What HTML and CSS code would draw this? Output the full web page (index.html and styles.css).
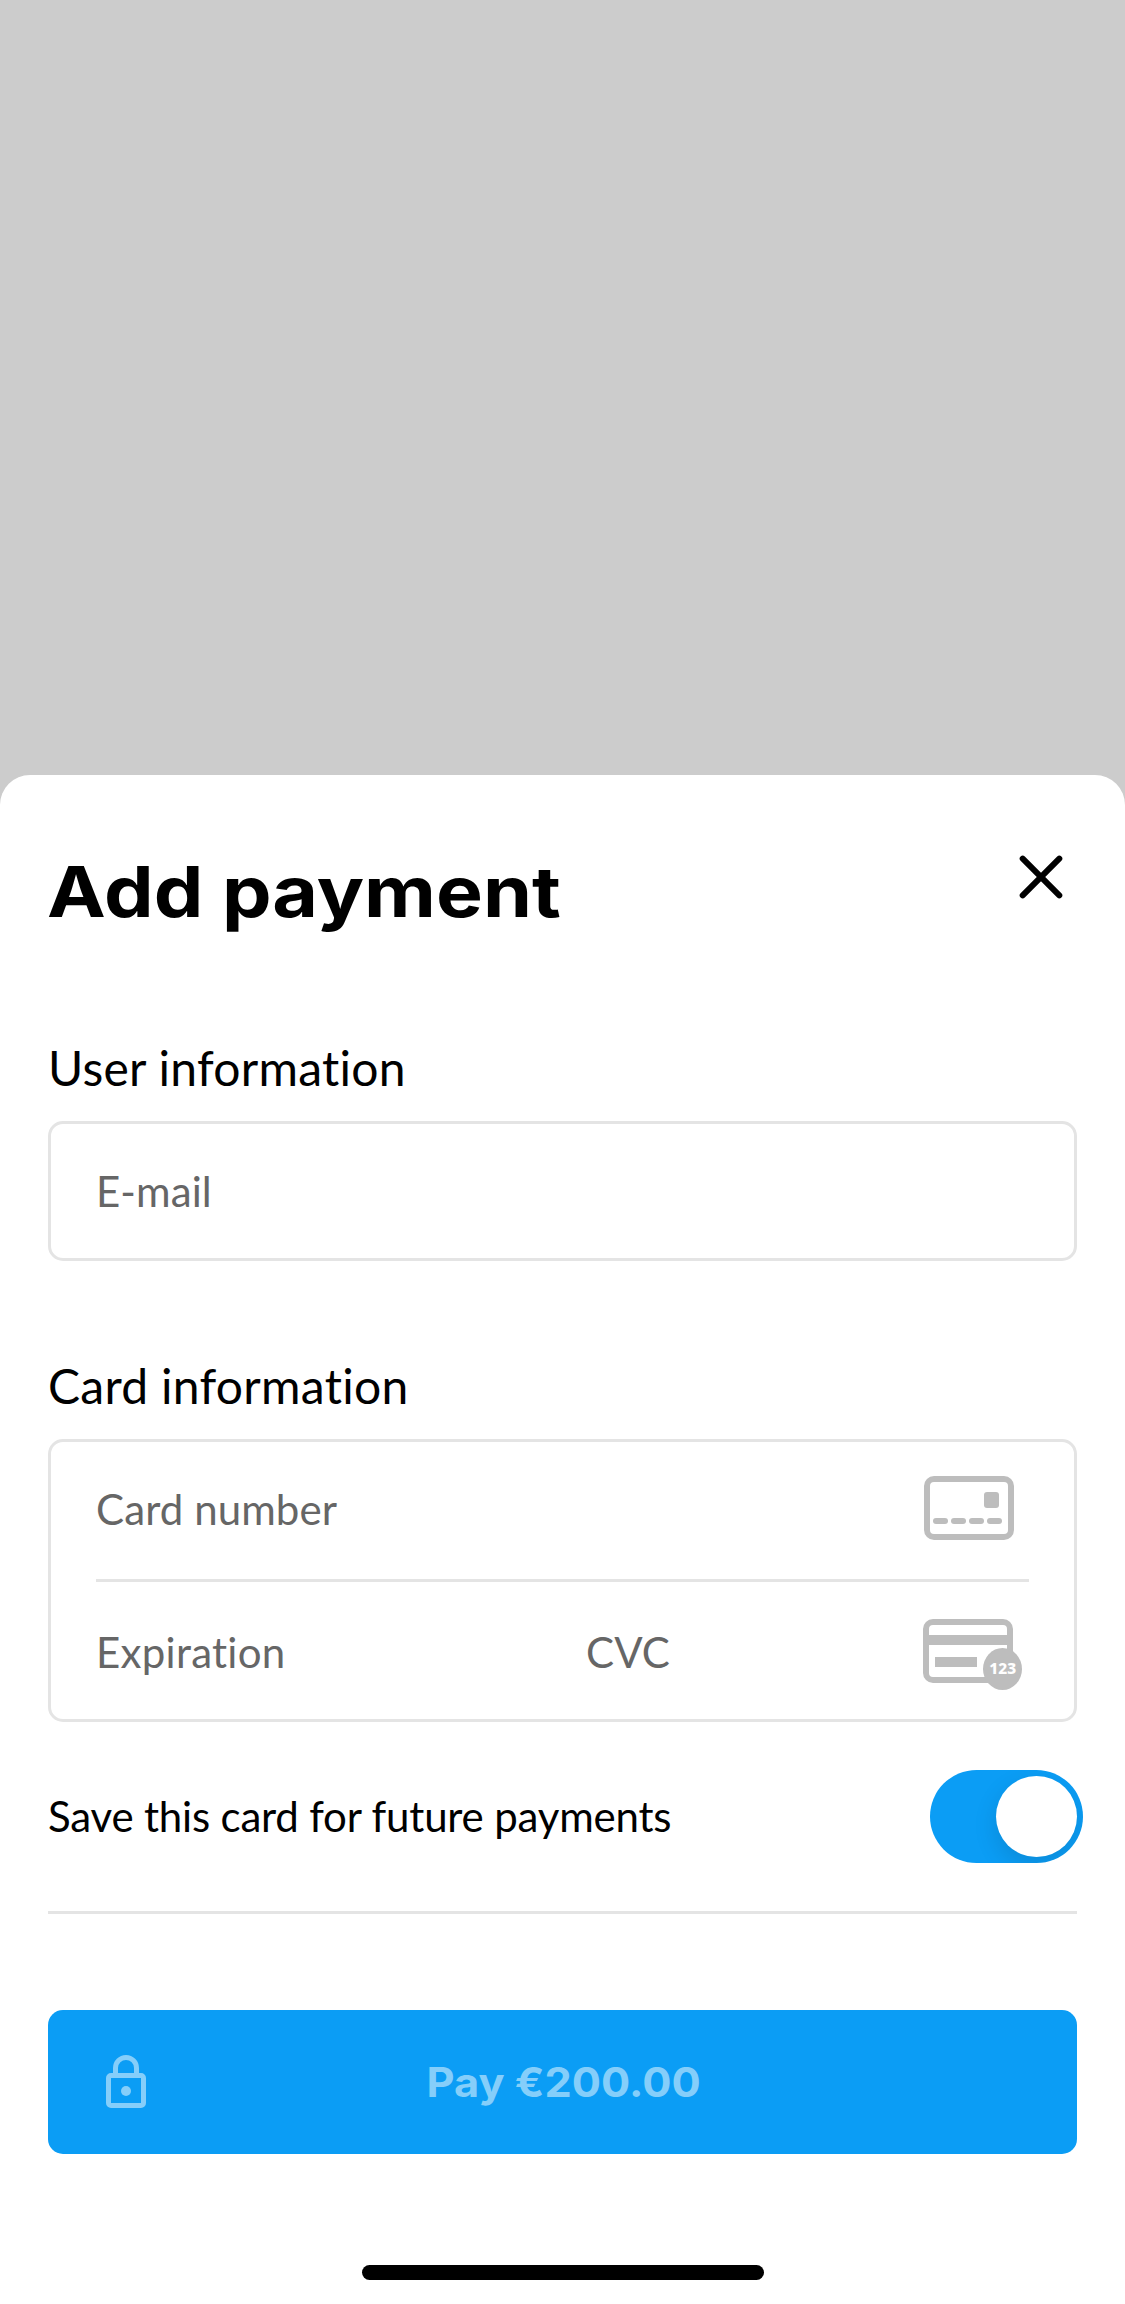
FILE: index.html
```html
<!DOCTYPE html>
<html lang="en">
<head>
<meta charset="utf-8">
<title>Add payment</title>
<link rel="stylesheet" href="styles.css">
</head>
<body>
<main class="sheet">
  <header class="header">
    <h1 class="title">Add payment</h1>
    <svg class="close" width="48" height="48" viewBox="0 0 48 48" role="img" aria-label="Close">
      <path d="M5.7 5.7 42.3 42.3M42.3 5.7 5.7 42.3" fill="none" stroke="#000" stroke-width="6" stroke-linecap="round"/>
    </svg>
  </header>

  <section class="group">
    <h2 class="label">User information</h2>
    <div class="box">
      <div class="row"><span class="placeholder">E-mail</span></div>
    </div>
  </section>

  <section class="group">
    <h2 class="label">Card information</h2>
    <div class="box">
      <div class="row row-number">
        <span class="placeholder">Card number</span>
        <svg class="card-icon" width="102" height="74" viewBox="0 0 102 74" fill="#bdbdbd">
          <rect x="6" y="6" width="84" height="58" rx="7" fill="none" stroke="#bdbdbd" stroke-width="6"/>
          <rect x="63" y="19" width="15" height="16" rx="3"/>
          <rect x="12" y="45" width="15" height="6" rx="3"/>
          <rect x="30" y="45" width="15" height="6" rx="3"/>
          <rect x="48" y="45" width="15" height="6" rx="3"/>
          <rect x="66" y="45" width="15" height="6" rx="3"/>
        </svg>
      </div>
      <div class="row row-split">
        <span class="placeholder expiration">Expiration</span>
        <span class="placeholder">CVC</span>
        <svg class="card-icon" width="102" height="74" viewBox="0 0 102 74" fill="#bdbdbd">
          <rect x="5" y="5" width="84" height="58" rx="7" fill="none" stroke="#bdbdbd" stroke-width="6"/>
          <rect x="5" y="18" width="84" height="10"/>
          <rect x="14" y="40" width="42" height="10"/>
          <ellipse cx="81.5" cy="52" rx="19.5" ry="21"/>
          <text class="cvc-digits" x="81.7" y="56.8" text-anchor="middle">123</text>
        </svg>
      </div>
    </div>
  </section>

  <div class="save">
    <span class="save-text">Save this card for future payments</span>
    <div class="toggle"><div class="knob"></div></div>
  </div>

  <div class="pay">
    <svg class="lock" width="40" height="54" viewBox="0 0 40 54">
      <rect x="2.5" y="20.5" width="35" height="30" rx="2.5" fill="none" stroke="#85cefa" stroke-width="5"/>
      <path d="M9.5 19V13a10.5 10.5 0 0 1 21 0V19" fill="none" stroke="#85cefa" stroke-width="5"/>
      <circle cx="20" cy="36" r="5" fill="#85cefa"/>
    </svg>
    <span class="pay-text">Pay €200.00</span>
  </div>

  <div class="home-bar"></div>
</main>
</body>
</html>
```
FILE: styles.css
```css
* {
  box-sizing: border-box;
}

body {
  margin: 0;
  padding-top: 775px;
  min-height: 2304px;
  background: #ccc;
  color: #000;
  font-family: Lato, "Noto Sans", sans-serif;
  font-variant-ligatures: none;
}

.sheet {
  height: 1529px;
  padding: 75px 48px 0;
  background: #fff;
  border-radius: 30px 30px 0 0;
}

.header {
  display: flex;
  justify-content: space-between;
  height: 188px;
  padding-right: 12px;
}

.title {
  margin: 0 0 0 -1px;
  font: 700 70px/84px Inter, "Open Sans", sans-serif;
  transform: scaleX(1.125);
  transform-origin: left;
}

.close {
  margin-top: 3px;
}

.group + .group {
  margin-top: 95px;
}

.label {
  margin: 0 0 24px;
  font-size: 48px;
  font-weight: 400;
  letter-spacing: 0.28px;
  line-height: 59px;
}

.box {
  padding: 0 45px;
  border: 3px solid #e4e4e4;
  border-radius: 15px;
}

.row {
  display: flex;
  align-items: center;
  height: 134px;
}

.row-number {
  justify-content: space-between;
  height: 140px;
  padding: 0 12px 3px 0;
  border-bottom: 3px solid #e4e4e4;
}

.row-split {
  height: 137px;
  padding: 2px 12px 0 0;
}

.placeholder {
  color: #666;
  font-size: 42px;
  letter-spacing: 0.1px;
  line-height: 50px;
}

.expiration {
  width: 490px;
  letter-spacing: 0.28px;
}

.row .card-icon {
  margin: 2px -6px 0 0;
}

.row-split .card-icon {
  margin: 5px -6px 0 auto;
}

.cvc-digits {
  fill: #fff;
  font: 800 15.5px "Noto Sans", sans-serif;
}

.save {
  display: flex;
  align-items: center;
  justify-content: space-between;
  height: 192px;
  border-bottom: 3px solid #e4e4e4;
}

.save-text {
  margin-top: -1px;
  font-size: 42px;
  letter-spacing: -0.19px;
  line-height: 50px;
}

.toggle {
  display: flex;
  justify-content: flex-end;
  width: 153px;
  height: 93px;
  margin-right: -6px;
  padding: 6px;
  overflow: hidden;
  background: #0b9df5;
  border-radius: 47px;
}

.knob {
  width: 81px;
  height: 81px;
  background: #fff;
  border-radius: 50%;
  box-shadow: 0 9px 24px rgba(0, 0, 0, 0.12);
}

.pay {
  display: grid;
  grid-template-columns: 58px 1fr 58px;
  align-items: center;
  height: 144px;
  margin-top: 96px;
  background: #0b9df5;
  border-radius: 15px;
}

.lock {
  margin-left: 58px;
}

.pay-text {
  padding: 2px 0 0 2px;
  color: #85cefa;
  font: 700 40.5px/50px Inter, "Open Sans", sans-serif;
  text-align: center;
  transform: scaleX(1.07);
}

.home-bar {
  width: 402px;
  height: 15px;
  margin: 111px auto 0;
  background: #000;
  border-radius: 8px;
}
```
